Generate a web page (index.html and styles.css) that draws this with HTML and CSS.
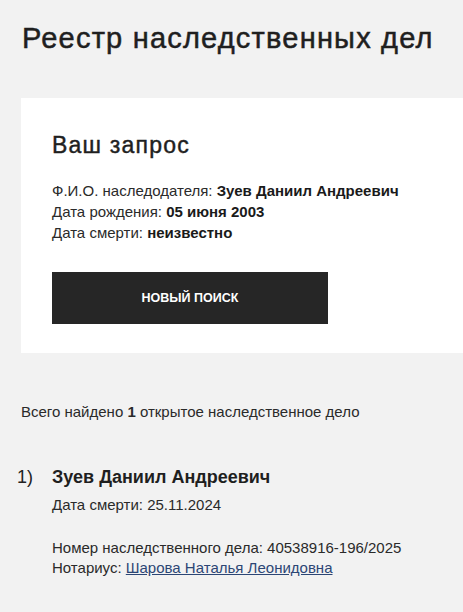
FILE: index.html
```html
<!DOCTYPE html>
<html lang="ru">
<head>
<meta charset="utf-8">
<link rel="stylesheet" href="styles.css">
</head>
<body>
<div class="page">
  <h1 class="title">Реестр наследственных дел</h1>
  <section class="card">
    <h2 class="card-title">Ваш запрос</h2>
    <div class="info">
      <div>Ф.И.О. наследодателя: <b>Зуев Даниил Андреевич</b></div>
      <div>Дата рождения: <b>05 июня 2003</b></div>
      <div>Дата смерти: <b>неизвестно</b></div>
    </div>
    <button class="btn">НОВЫЙ ПОИСК</button>
  </section>
  <p class="found">Всего найдено <b>1</b> открытое наследственное дело</p>
  <div class="result">
    <div class="num">1)</div>
    <div class="res-body">
      <div class="res-name">Зуев Даниил Андреевич</div>
      <div class="res-line">Дата смерти: 25.11.2024</div>
      <div class="res-meta">
        <div>Номер наследственного дела: 40538916-196/2025</div>
        <div>Нотариус: <a href="#" class="link">Шарова Наталья Леонидовна</a></div>
      </div>
    </div>
  </div>
</div>
</body>
</html>
```
FILE: styles.css
```css
html, body {
  margin: 0;
  padding: 0;
  background: #f2f2f2;
}
body {
  font-family: "Liberation Sans", Arial, sans-serif;
  color: #222;
}
.page {
  padding: 0 0 0 21px;
}
.title {
  margin: 0;
  padding: 21px 0 0 1px;
  font-size: 29px;
  line-height: 34px;
  letter-spacing: 1.2px;
  font-weight: normal;
  -webkit-text-stroke: 0.5px #1f1f1f;
  color: #1f1f1f;
}
.card {
  margin-top: 43px;
  background: #fff;
  padding: 33px 0 29px 31px;
}
.card-title {
  margin: 0;
  font-size: 23px;
  line-height: 28px;
  letter-spacing: 1.2px;
  font-weight: normal;
  -webkit-text-stroke: 0.45px #1f1f1f;
  color: #1f1f1f;
}
.info {
  margin-top: 21px;
  font-size: 15px;
  line-height: 21px;
  color: #2a2a2a;
}
.info b {
  color: #1a1a1a;
}
.btn {
  display: block;
  margin-top: 29px;
  width: 276px;
  height: 52px;
  border: none;
  background: #262626;
  color: #fff;
  font-family: "Liberation Sans", Arial, sans-serif;
  font-weight: bold;
  font-size: 12.5px;
  padding: 0;
}
.found {
  margin: 49px 0 0;
  font-size: 15px;
  line-height: 20px;
  color: #2a2a2a;
}
.result {
  display: flex;
  margin-top: 44px;
  margin-left: -4px;
}
.num {
  width: 35px;
  font-size: 18px;
  line-height: 22px;
  color: #222;
}
.res-name {
  font-size: 18px;
  line-height: 22px;
  font-weight: bold;
  color: #1f1f1f;
}
.res-line {
  margin-top: 7px;
  font-size: 15px;
  line-height: 20px;
  color: #2a2a2a;
}
.res-meta {
  margin-top: 23px;
  font-size: 15px;
  line-height: 20px;
  color: #2a2a2a;
}
.link {
  color: #2c4675;
  text-decoration: underline;
}
```
